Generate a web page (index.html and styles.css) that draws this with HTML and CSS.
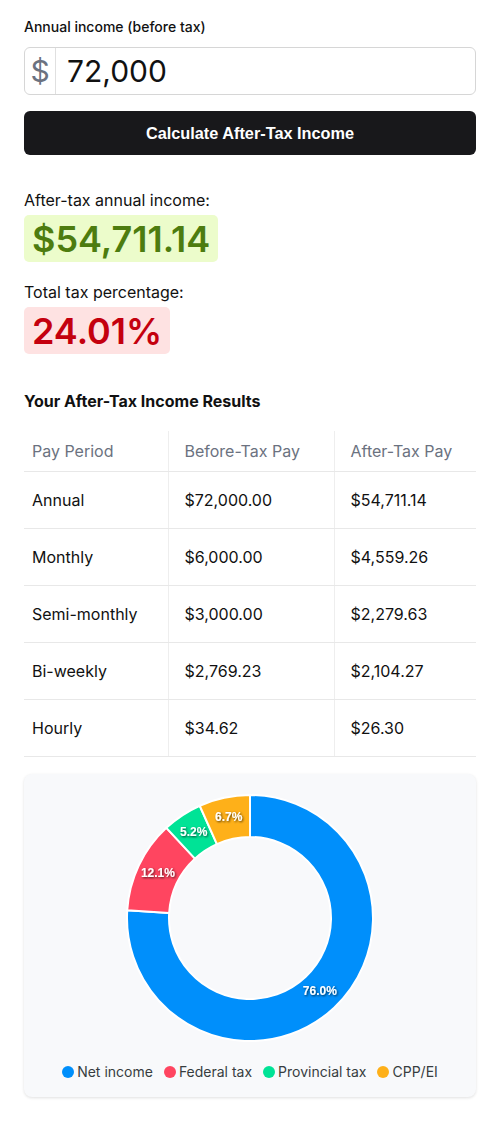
FILE: index.html
```html
<!DOCTYPE html>
<html lang="en">
<head>
<meta charset="utf-8">
<title>After-Tax Income Calculator</title>
<link rel="stylesheet" href="styles.css">
</head>
<body>
<main class="calc">
  <label class="field-label" for="income">Annual income (before tax)</label>
  <div class="input-group">
    <span class="prefix">$</span>
    <input id="income" class="amount" type="text" value="72,000">
  </div>
  <button class="calc-btn" type="button">Calculate After-Tax Income</button>

  <section class="summary">
    <div class="sum-label">After-tax annual income:</div>
    <div class="pill pill-green">$54,711.14</div>
    <div class="sum-label sum-gap">Total tax percentage:</div>
    <div class="pill pill-red">24.01%</div>
  </section>

  <h2 class="results-title">Your After-Tax Income Results</h2>
  <table class="results">
    <colgroup><col class="c1"><col class="c2"><col class="c3"></colgroup>
    <thead>
      <tr><th>Pay Period</th><th>Before-Tax Pay</th><th>After-Tax Pay</th></tr>
    </thead>
    <tbody>
      <tr><td>Annual</td><td>$72,000.00</td><td>$54,711.14</td></tr>
      <tr><td>Monthly</td><td>$6,000.00</td><td>$4,559.26</td></tr>
      <tr><td>Semi-monthly</td><td>$3,000.00</td><td>$2,279.63</td></tr>
      <tr><td>Bi-weekly</td><td>$2,769.23</td><td>$2,104.27</td></tr>
      <tr><td>Hourly</td><td>$34.62</td><td>$26.30</td></tr>
    </tbody>
  </table>

  <div class="chart-card">
    <svg class="donut" width="250" height="250" viewBox="0 0 250 250">
      <defs>
        <filter id="ds" x="-20%" y="-50%" width="140%" height="200%">
          <feDropShadow dx="1" dy="1" stdDeviation="0.9" flood-color="#000" flood-opacity="0.7"/>
        </filter>
      </defs>
      <g class="segs">
        <path fill="#008FFB" d="M125 2 A123 123 0 1 1 2.24 117.28 L44.16 119.91 A81 81 0 1 0 125 44 Z"/>
        <path fill="#FF4560" d="M2.24 117.28 A123 123 0 0 1 41.35 34.83 L69.91 65.62 A81 81 0 0 0 44.16 119.91 Z"/>
        <path fill="#00E396" d="M41.35 34.83 A123 123 0 0 1 74.74 12.74 L91.90 51.07 A81 81 0 0 0 69.91 65.62 Z"/>
        <path fill="#FEB019" d="M74.74 12.74 A123 123 0 0 1 125 2 L125 44 A81 81 0 0 0 91.90 51.07 Z"/>
      </g>
      <g class="labels" filter="url(#ds)">
        <text x="194.8" y="198.4">76.0%</text>
        <text x="32.9" y="80.3">12.1%</text>
        <text x="68.7" y="38.9">5.2%</text>
        <text x="103.7" y="24.3">6.7%</text>
      </g>
    </svg>
    <ul class="legend">
      <li><span class="dot dot-blue"></span>Net income</li>
      <li><span class="dot dot-red"></span>Federal tax</li>
      <li><span class="dot dot-green"></span>Provincial tax</li>
      <li><span class="dot dot-orange"></span>CPP/EI</li>
    </ul>
  </div>
</main>
</body>
</html>
```
FILE: styles.css
```css
* { box-sizing: border-box; }

body {
  margin: 0;
  background: #ffffff;
  font-family: Inter, "Noto Sans", sans-serif;
  color: #111111;
}

.calc {
  padding: 17px 24px 24px;
  display: flex;
  flex-direction: column;
}

.field-label {
  font-size: 14px;
  font-weight: 500;
  line-height: 20px;
  color: #111;
}

.input-group {
  margin-top: 10px;
  display: flex;
  height: 48px;
  border: 1px solid #d6d6d6;
  border-radius: 6px;
  overflow: hidden;
}

.prefix {
  width: 31px;
  flex: none;
  display: flex;
  align-items: center;
  justify-content: center;
  border-right: 1px solid #e0e0e0;
  font-size: 30px;
  color: #6b7280;
}

.amount {
  flex: 1;
  border: 0;
  outline: none;
  padding: 0 11px;
  font-family: Inter, "Noto Sans", sans-serif;
  font-size: 30px;
  color: #111;
  background: transparent;
}

.calc-btn {
  margin-top: 16px;
  height: 44px;
  border: 0;
  border-radius: 6px;
  background: #18181b;
  color: #ffffff;
  font-family: "Liberation Sans", Arial, sans-serif;
  font-weight: 700;
  font-size: 16.3px;
}

.summary {
  margin-top: 33px;
  display: flex;
  flex-direction: column;
  align-items: flex-start;
}

.sum-label {
  font-size: 16px;
  line-height: 24px;
  color: #111;
}

.sum-gap { margin-top: 18px; }

.pill {
  margin-top: 3px;
  padding: 0 8px;
  height: 47px;
  display: flex;
  align-items: center;
  border-radius: 5px;
  font-size: 36px;
  font-weight: 600;
}

.pill-green { background: #ecfccb; color: #4d7c0f; }
.pill-red { background: #fee2e2; color: #c4000e; }

.results-title {
  margin: 36px 0 0;
  font-size: 16px;
  line-height: 22px;
  font-weight: 700;
  color: #111;
}

.results {
  margin-top: 19px;
  width: 452px;
  border-collapse: collapse;
  table-layout: fixed;
  font-size: 16px;
}

.results col.c1 { width: 144px; }
.results col.c2 { width: 166px; }
.results col.c3 { width: 142px; }

.results th,
.results td {
  text-align: left;
  padding: 0 16px;
  border-bottom: 1px solid #e8e8e8;
  border-left: 1px solid #eeeeee;
}

.results th:first-child,
.results td:first-child {
  padding-left: 8px;
  border-left: 0;
}

.results th {
  height: 40px;
  font-weight: 400;
  color: #6b7280;
}

.results td {
  height: 57px;
  color: #111;
}

.chart-card {
  margin-top: 17px;
  background: #f8f9fb;
  border-radius: 8px;
  box-shadow: 0 1px 3px rgba(0, 0, 0, 0.12);
  padding: 19px 0 15px;
  display: flex;
  flex-direction: column;
  align-items: center;
}

.donut { display: block; }

.segs path {
  stroke: #ffffff;
  stroke-width: 2;
  stroke-linejoin: round;
}

.labels text {
  fill: #ffffff;
  font-family: "Liberation Sans", Arial, sans-serif;
  font-weight: 700;
  font-size: 12px;
  text-anchor: middle;
  dominant-baseline: central;
}

.legend {
  list-style: none;
  margin: 19px 0 0;
  padding: 0;
  display: flex;
  gap: 11px;
}

.legend li {
  display: flex;
  align-items: center;
  gap: 3px;
  font-size: 14px;
  line-height: 20px;
  color: #373d3f;
}

.dot {
  width: 12px;
  height: 12px;
  border-radius: 50%;
  display: inline-block;
}

.dot-blue { background: #008FFB; }
.dot-red { background: #FF4560; }
.dot-green { background: #00E396; }
.dot-orange { background: #FEB019; }
```
